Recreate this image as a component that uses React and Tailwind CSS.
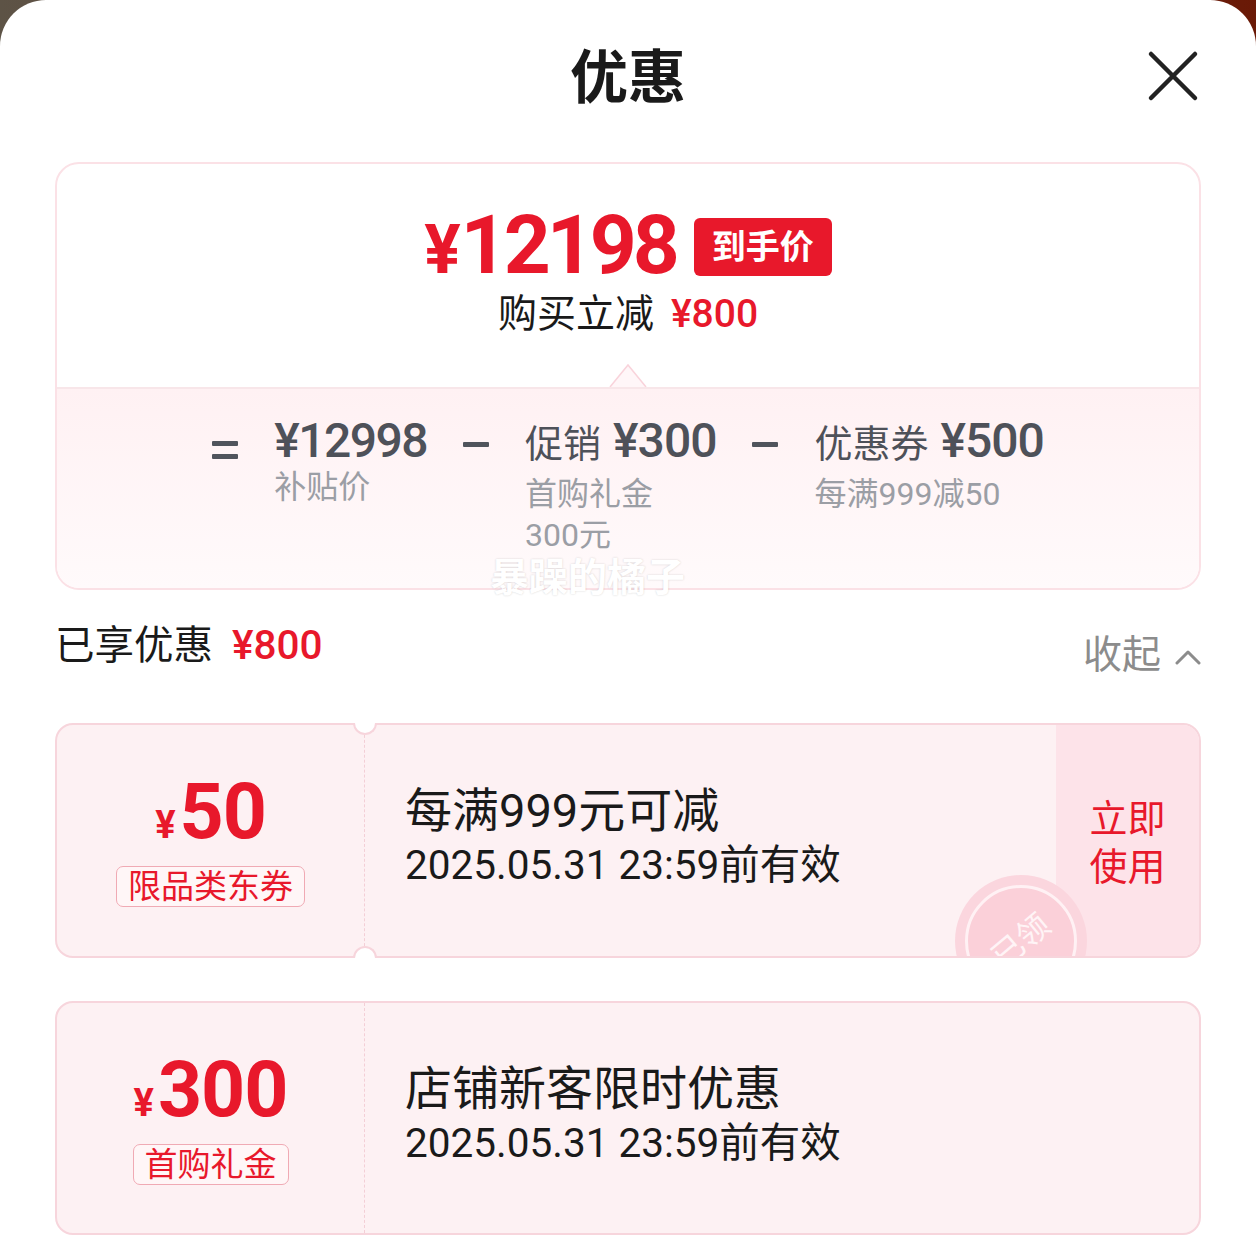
import React from 'react'

const red = 'text-[#e8182b]'

const Bar = ({ className = '' }) => (
  <span className={`block w-[26px] h-[5px] rounded-[1px] bg-[#50545c] ${className}`} />
)

function Coupon({ amount, tag, title, showUse, notch, height }) {
  return (
    <div className="relative">
      <div
        className={`relative flex ${height} rounded-[18px] border-2 border-[#f7d5dc] bg-[#fdf1f3] overflow-hidden`}
      >
        {/* amount */}
        <div className="w-[308px] shrink-0 border-r-[1.5px] border-dashed border-[#f3cfd6] flex flex-col items-center justify-center">
          <div className={`flex items-baseline font-bold leading-none ${red}`}>
            <span className="text-[38px] mr-[4px]">¥</span>
            <span className="text-[77px] tracking-[-1px]">{amount}</span>
          </div>
          <div className={`mt-[15px] h-[41px] px-[11px] rounded-[7px] border-[1.5px] border-[#f0aab4] bg-[#fff6f7] text-[33px] leading-none flex items-center ${red}`}>
            {tag}
          </div>
        </div>

        {/* info */}
        <div className="flex-1 pl-[40px] pb-[8px] flex flex-col justify-center text-[#1a1a1a]">
          <div className="text-[47px] leading-[52px]">{title}</div>
          <div className="mt-[5px] text-[40.5px] leading-[46px]">2025.05.31 23:59前有效</div>
        </div>

        {showUse && (
          <div className={`w-[143px] shrink-0 bg-[#fde3e9] pt-[5px] flex flex-col items-center justify-center text-[38px] leading-[48px] ${red}`}>
            <span>立即</span>
            <span>使用</span>
          </div>
        )}

        {/* 已领 stamp */}
        {showUse && (
          <div className="absolute left-[898px] top-[150px] w-[132px] h-[132px] rounded-full bg-[#fbd6de] flex items-center justify-center">
            <div className="w-[112px] h-[112px] rounded-full border-[3px] border-[#fff1f4] bg-[#fbd0d9] flex items-center justify-center">
              <span className="-rotate-[40deg] text-[32px] leading-none text-[#fff4f6]">已领</span>
            </div>
          </div>
        )}
      </div>

      {notch && (
        <>
          <span className="absolute top-0 left-[298px] w-[24px] h-[12px] rounded-b-full bg-white border-2 border-t-0 border-[#f7d5dc]" />
          <span className="absolute bottom-0 left-[298px] w-[24px] h-[12px] rounded-t-full bg-white border-2 border-b-0 border-[#f7d5dc]" />
        </>
      )}
    </div>
  )
}

export default function App() {
  return (
    <div className="min-h-[1257px] bg-linear-to-r from-[#5d5346] to-[#6a1906] font-[Roboto,'Noto_Sans_CJK_SC',sans-serif]">
      <div className="min-h-[1257px] rounded-t-[46px] bg-white px-[55px]">
        {/* Header */}
        <div className="relative h-[162px] flex justify-center pt-[43px]">
          <h1 className="text-[58px] leading-[70px] font-bold text-[#1a1a1a]">优惠</h1>
          <svg
            className="absolute right-[2px] top-[50px]"
            width="52"
            height="52"
            viewBox="0 0 52 52"
          >
            <path
              d="M4 4 L48 48 M48 4 L4 48"
              stroke="#222"
              strokeWidth="4.5"
              strokeLinecap="round"
              fill="none"
            />
          </svg>
        </div>

        {/* Summary card */}
        <div className="relative">
          <div className="rounded-[24px] border-2 border-[#fbe1e6] overflow-hidden">
            <div className="relative h-[223px] flex flex-col items-center pt-[40px]">
              <div className="flex items-center">
                <span className={`flex items-baseline font-bold leading-none ${red}`}>
                  <span className="text-[68px]">¥</span>
                  <span className="text-[82px] tracking-[-4px]">12198</span>
                </span>
                <span className="ml-[18px] mt-[4px] h-[58px] px-[18px] rounded-[6px] bg-[#e8182b] text-white text-[34px] font-bold flex items-center">
                  到手价
                </span>
              </div>
              <div className="mt-[9px] flex items-baseline leading-none">
                <span className="text-[39px] text-[#1a1a1a]">购买立减</span>
                <span className={`ml-[17px] text-[39px] font-medium ${red}`}>¥800</span>
              </div>
              <svg
                className="absolute bottom-0 left-1/2 -translate-x-1/2"
                width="40"
                height="24"
                viewBox="0 0 40 24"
              >
                <path d="M2 24 L20 2 L38 24" fill="#fff6f8" stroke="#f9d3db" strokeWidth="1.5" />
              </svg>
            </div>

            <div className="h-[201px] border-t-2 border-[#f8e6e9] bg-linear-to-b from-[#fff1f3] to-[#fffafb] flex justify-center items-start gap-[36px] pt-[28px] text-[#4e5159]">
              <div className="mt-[24px] flex flex-col gap-[8px]">
                <Bar />
                <Bar />
              </div>
              <div>
                <div className="text-[48px] leading-[48px] font-medium tracking-[-1.5px]">¥12998</div>
                <div className="mt-[2px] text-[32px] leading-[41px] text-[#9b9ea5]">补贴价</div>
              </div>
              <Bar className="mt-[25px]" />
              <div>
                <div className="flex items-baseline text-[48px] leading-[48px] font-medium">
                  <span className="text-[38px] font-normal">促销</span>
                  <span className="ml-[12px] tracking-[-1px]">¥300</span>
                </div>
                <div className="mt-[6px] text-[32px] leading-[41px] text-[#9b9ea5]">
                  <div>首购礼金</div>
                  <div>300元</div>
                </div>
              </div>
              <Bar className="mt-[25px]" />
              <div>
                <div className="flex items-baseline text-[48px] leading-[48px] font-medium">
                  <span className="text-[38px] font-normal">优惠券</span>
                  <span className="ml-[12px] tracking-[-1px]">¥500</span>
                </div>
                <div className="mt-[6px] text-[32px] leading-[41px] text-[#9b9ea5]">每满999减50</div>
              </div>
            </div>
          </div>

          {/* watermark */}
          <span className="absolute left-[435px] top-[394px] text-[39px] leading-[44px] font-bold text-white [text-shadow:0_0_2px_rgba(0,0,0,0.18)]">
            暴躁的橘子
          </span>
        </div>

        {/* Enjoyed discount row */}
        <div className="mt-[31px] h-[58px] flex justify-between items-start">
          <div className="flex items-baseline leading-[48px]">
            <span className="text-[39.5px] text-[#1a1a1a]">已享优惠</span>
            <span className={`ml-[19px] text-[40.5px] font-medium ${red}`}>¥800</span>
          </div>
          <div className="mt-[10px] flex items-center leading-[48px] text-[39px] text-[#8c8c8c]">
            收起
            <svg className="ml-[14px] mt-[4px]" width="26" height="18" viewBox="0 0 26 18">
              <polyline
                points="2,15 13,4 24,15"
                fill="none"
                stroke="#8c8c8c"
                strokeWidth="3"
                strokeLinecap="round"
                strokeLinejoin="round"
              />
            </svg>
          </div>
        </div>

        {/* Coupons */}
        <div className="mt-[44px]">
          <Coupon amount="50" tag="限品类东券" title="每满999元可减" showUse notch height="h-[235px]" />
        </div>
        <div className="mt-[43px]">
          <Coupon amount="300" tag="首购礼金" title="店铺新客限时优惠" height="h-[234px]" />
        </div>
      </div>
    </div>
  )
}
